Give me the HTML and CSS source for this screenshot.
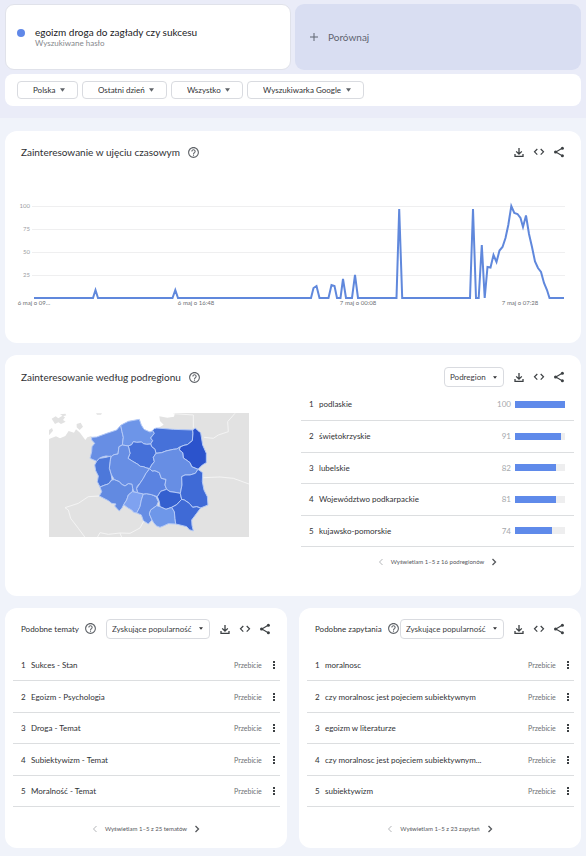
FILE: index.html
```html
<!DOCTYPE html>
<html lang="pl">
<head>
<meta charset="utf-8">
<meta name="viewport" content="width=device-width, initial-scale=1">
<title>egoizm droga do zagłady czy sukcesu</title>
<link rel="stylesheet" href="styles.css">
</head>
<body>
<svg class="sprite" aria-hidden="true">
  <symbol id="help" viewBox="0 0 24 24"><path d="M11 18h2v-2h-2v2zm1-16C6.48 2 2 6.48 2 12s4.48 10 10 10 10-4.48 10-10S17.52 2 12 2zm0 18c-4.41 0-8-3.59-8-8s3.59-8 8-8 8 3.59 8 8-3.59 8-8 8zm0-14c-2.21 0-4 1.79-4 4h2c0-1.1.9-2 2-2s2 .9 2 2c0 2-3 1.75-3 5h2c0-2.25 3-2.5 3-5 0-2.21-1.79-4-4-4z"/></symbol>
  <symbol id="download" viewBox="0 0 12 12"><path d="M6 2v6M3.2 5.4 6 8.2l2.8-2.8M2 8v2.4h8V8" fill="none" stroke="currentColor" stroke-width="1.3"/></symbol>
  <symbol id="code" viewBox="0 0 12 12"><path d="M4.3 3 1.5 5.8l2.8 2.8M7.7 3l2.8 2.8-2.8 2.8" fill="none" stroke="currentColor" stroke-width="1.2"/></symbol>
  <symbol id="share" viewBox="0 0 12 12"><path d="M9.2 2.3 2.8 6l6.4 3.7" fill="none" stroke="currentColor" stroke-width="1.1"/><circle cx="9.4" cy="2.3" r="1.5"/><circle cx="2.6" cy="6" r="1.6"/><circle cx="9.4" cy="9.7" r="1.5"/></symbol>
  <symbol id="more" viewBox="0 0 4 10"><path d="M1 1h2v2H1zM1 4h2v2H1zM1 7h2v2H1z"/></symbol>
  <symbol id="arrow" viewBox="0 0 6 4"><path d="M0 0h6L3 4z"/></symbol>
  <symbol id="prev" viewBox="0 0 6 8"><path d="M4.5 1 1.5 4l3 3" fill="none" stroke="currentColor"/></symbol>
  <symbol id="next" viewBox="0 0 6 8"><path d="m1.5 1 3 3-3 3" fill="none" stroke="currentColor" stroke-width="1.3"/></symbol>
</svg>

<header class="top">
  <div class="terms">
    <div class="term">
      <span class="dot"></span>
      <div>
        <h1>egoizm droga do zagłady czy sukcesu</h1>
        <p>Wyszukiwane hasło</p>
      </div>
    </div>
    <button class="compare" type="button">
      <svg viewBox="0 0 8 8" aria-hidden="true"><path d="M4 0v8M0 4h8" stroke="currentColor"/></svg>
      Porównaj
    </button>
  </div>
  <div class="filters">
    <span class="pick"><select aria-label="Kraj"><option>Polska</option></select><svg><use href="#arrow"/></svg></span>
    <span class="pick"><select aria-label="Okres"><option>Ostatni dzień</option></select><svg><use href="#arrow"/></svg></span>
    <span class="pick"><select aria-label="Kategoria"><option>Wszystko</option></select><svg><use href="#arrow"/></svg></span>
    <span class="pick"><select aria-label="Usługa"><option>Wyszukiwarka Google</option></select><svg><use href="#arrow"/></svg></span>
  </div>
</header>

<main>
  <section class="card timeline">
    <div class="head">
      <h2>Zainteresowanie w ujęciu czasowym</h2>
      <button class="help" type="button" aria-label="Pomoc"><svg><use href="#help"/></svg></button>
      <div class="tools">
        <button type="button" aria-label="Pobierz"><svg><use href="#download"/></svg></button>
        <button type="button" aria-label="Umieść"><svg><use href="#code"/></svg></button>
        <button type="button" aria-label="Udostępnij"><svg><use href="#share"/></svg></button>
      </div>
    </div>
    <svg class="chart" viewBox="15 200 554 110" role="img" aria-label="Wykres zainteresowania">
      <path class="grid" d="M32 206.500H565M32 229.500H565M32 252.500H565M32 275.500H565"/>
      <g class="ylab"><text x="30" y="208">100</text><text x="30" y="231">75</text><text x="30" y="254">50</text><text x="30" y="277">25</text></g>
      <path class="line" d="M34 298H93L95.500 290 98 298H172.500L175.300 290 178 298H311L313.500 288 316.500 286 319.500 298H328.500L331.500 285 334.500 286 337 298H340.500L343 279 346 298H352L355 275 358 298H396.500L399.200 209 402.200 298H470L473 209 476 298H478.700L481.800 245 484.700 298 487.500 267 490.500 267.500 493.500 255 496.500 262 499.500 250.500 502.500 247 505.500 238 508.300 225 511.300 206 514.300 213 517.500 214 520.500 218 523 227 526 215.500 529 234 532 247 535 261.500 538 268 541 272 544 283 547 290 549.500 298H564"/>
      <g class="xlab"><text x="34" y="305">6 maj o 09…</text><text x="196" y="305">6 maj o 16:48</text><text x="358" y="305">7 maj o 00:08</text><text x="520" y="305">7 maj o 07:28</text></g>
    </svg>
  </section>

  <section class="card region">
    <div class="head">
      <h2>Zainteresowanie według podregionu</h2>
      <button class="help" type="button" aria-label="Pomoc"><svg><use href="#help"/></svg></button>
      <div class="tools">
        <span class="pick small"><select aria-label="Poziom"><option>Podregion</option></select><svg><use href="#arrow"/></svg></span>
        <button type="button" aria-label="Pobierz"><svg><use href="#download"/></svg></button>
        <button type="button" aria-label="Umieść"><svg><use href="#code"/></svg></button>
        <button type="button" aria-label="Udostępnij"><svg><use href="#share"/></svg></button>
      </div>
    </div>
    <div class="split">
      <svg class="map" viewBox="147 189 600 373" role="img" aria-label="Mapa Polski">
        <path fill="#e2e2e2" d="M147 189h600v373H147z"/>
        <path fill="#fff" d="M147 189H525L522 200 502 203 478 199 480 213 491 224 480 231 468 236 455 246 424 240 418 220 362 232 340 250 300 262 274 270 262 262 256 270 240 248 228 238 222 248 206 243 196 258 180 265 168 259 147 267z"/>
        <path fill="#e2e2e2" d="M155 206l12-7 8 6 12-8 8 5-6 8 8 5-14 7-8-5-10 5zM180 193l16-2 3 5-9 3zM230 222l12-4 7 12-10 10-9-8zM147 240l9-6 3 8-12 14zM288 190h18l-3 4h-12zM262 262l12-4 6 14-14 2z"/>
        <path class="border" d="M298 438 265 440 235 460 195 473 205 480 212 505 235 535 255 562M300 548l25 5 35-4 30 1 30-16 12-22M300 548l-8 14M360 549l5 13M610 383l50-2 40 4 47 17M612 262l28 3 15-10 30-10-2-30 22-25M520 191l60 4v38"/>
        <g class="areas">
          <path fill="#678ee4" d="M275 262 290 261 320 250 350 240 362 226 366 245 370 262 367 285 357 290 354 312 342 314 335 320 318 318 306 321 298 325 290 334 270 325 275 305 276 290 284 280 275 270z"/>
          <path fill="#6d95e8" d="M362 226 373 220 385 214 418 208 424 225 432 238 450 246 458 242 463 250 452 264 458 272 452 282 440 283 430 281 425 276 410 277 400 275 395 284 385 288 367 285 370 262 366 245z"/>
          <path fill="#4671d9" d="M458 242 462 236 470 234 520 238 578 240 579 250 577 272 562 284 552 286 540 291 530 297 520 298 498 303 485 308 468 310 465 298 455 290 452 282 458 272 452 264 463 250z"/>
          <path fill="#2b53cc" d="M578 240 586 234 594 242 602 248 608 285 619 310 619 338 607 345 594 358 575 350 570 338 562 332 550 324 548 308 538 300 540 291 552 286 562 284 577 272 579 250z"/>
          <path fill="#4570d9" d="M385 288 395 284 400 275 410 277 425 276 430 281 440 283 452 282 455 290 465 298 468 310 460 322 463 335 455 345 449 356 440 354 430 350 421 349 412 342 398 334 384 325 390 310z"/>
          <path fill="#678ee4" d="M357 290 367 285 385 288 390 310 384 325 398 334 412 342 421 349 430 350 440 354 449 356 438 370 430 385 420 400 412 408 410 415 413 428 402 426 396 410 396 403 385 401 375 408 365 403 358 395 343 389 333 372 328 355 330 335 333 320 342 314 354 312z"/>
          <path fill="#4d78da" d="M290 334 298 325 306 324 318 322 333 318 330 335 328 355 333 372 336 388 325 402 315 405 300 411 292 395 295 378 287 362 284 345z"/>
          <path fill="#628ae1" d="M300 411 315 405 325 402 336 390 343 389 358 395 365 403 375 408 385 401 396 403 398 415 397 425 385 435 380 450 371 464 366 474 358 483 350 475 344 468 348 462 335 460 325 452 298 438 305 425z"/>
          <path fill="#7fa2f0" d="M397 425 402 426 413 428 430 432 424 450 420 470 410 489 401 487 395 480 384 474 371 464 380 450 385 435z"/>
          <path fill="#668de4" d="M430 432 440 431 455 434 468 440 475 455 470 467 452 480 448 492 456 510 445 522 430 512 424 495 410 489 420 470 424 450z"/>
          <path fill="#5b83e1" d="M449 356 456 363 465 362 478 368 484 385 498 388 495 405 500 418 482 424 472 440 455 434 440 431 430 432 413 428 410 415 420 400 430 385 438 370z"/>
          <path fill="#678ee4" d="M468 310 485 308 498 303 520 298 530 297 540 291 538 300 548 308 550 324 562 332 570 338 575 350 594 358 586 370 570 375 555 375 545 380 546 405 541 430 525 427 510 425 500 418 495 405 498 388 484 385 478 368 465 362 456 363 449 356 455 345 463 335 460 322z"/>
          <path fill="#3460cf" d="M472 440 482 424 500 418 510 425 525 427 541 430 545 448 530 464 515 472 498 478 480 470 478 455z"/>
          <path fill="#3f6ad6" d="M545 380 555 375 570 375 586 370 594 358 608 368 607 395 612 420 622 440 624 465 602 474 590 470 578 472 568 460 553 450 545 448 541 430 546 405z"/>
          <path fill="#6e97e9" d="M452 480 470 467 480 470 498 478 515 472 523 485 525 505 527 522 505 521 490 528 480 532 470 528 462 520 456 510 448 492z"/>
          <path fill="#3f6ad6" d="M515 472 530 464 545 448 553 450 568 460 578 472 590 470 602 474 590 490 575 510 576 526 580 543 568 539 560 530 540 525 527 522 525 505 523 485z"/>
        </g>
      </svg>
      <div>
        <table>
          <tr><td class="num">1</td><td class="name">podlaskie</td><td class="val">100</td><td class="meter"><span><i style="width:100%"></i></span></td></tr>
          <tr><td class="num">2</td><td class="name">świętokrzyskie</td><td class="val">91</td><td class="meter"><span><i style="width:91%"></i></span></td></tr>
          <tr><td class="num">3</td><td class="name">lubelskie</td><td class="val">82</td><td class="meter"><span><i style="width:82%"></i></span></td></tr>
          <tr><td class="num">4</td><td class="name">Województwo podkarpackie</td><td class="val">81</td><td class="meter"><span><i style="width:81%"></i></span></td></tr>
          <tr><td class="num">5</td><td class="name">kujawsko-pomorskie</td><td class="val">74</td><td class="meter"><span><i style="width:74%"></i></span></td></tr>
        </table>
        <nav class="pager"><button type="button" aria-label="Wstecz" disabled><svg><use href="#prev"/></svg></button>Wyświetlam 1–5 z 16 podregionów<button type="button" aria-label="Dalej"><svg><use href="#next"/></svg></button></nav>
      </div>
    </div>
  </section>

  <div class="pair">
    <section class="card related">
      <div class="head">
        <h3>Podobne tematy</h3>
        <button class="help" type="button" aria-label="Pomoc"><svg><use href="#help"/></svg></button>
        <div class="tools">
          <span class="pick small"><select aria-label="Sortowanie tematów"><option>Zyskujące popularność</option></select><svg><use href="#arrow"/></svg></span>
          <button type="button" aria-label="Pobierz"><svg><use href="#download"/></svg></button>
          <button type="button" aria-label="Umieść"><svg><use href="#code"/></svg></button>
          <button type="button" aria-label="Udostępnij"><svg><use href="#share"/></svg></button>
        </div>
      </div>
      <table>
        <tr><td class="num">1</td><td class="name">Sukces - Stan</td><td class="rise">Przebicie</td><td class="menu"><button type="button" aria-label="Więcej"><svg><use href="#more"/></svg></button></td></tr>
        <tr><td class="num">2</td><td class="name">Egoizm - Psychologia</td><td class="rise">Przebicie</td><td class="menu"><button type="button" aria-label="Więcej"><svg><use href="#more"/></svg></button></td></tr>
        <tr><td class="num">3</td><td class="name">Droga - Temat</td><td class="rise">Przebicie</td><td class="menu"><button type="button" aria-label="Więcej"><svg><use href="#more"/></svg></button></td></tr>
        <tr><td class="num">4</td><td class="name">Subiektywizm - Temat</td><td class="rise">Przebicie</td><td class="menu"><button type="button" aria-label="Więcej"><svg><use href="#more"/></svg></button></td></tr>
        <tr><td class="num">5</td><td class="name">Moralność - Temat</td><td class="rise">Przebicie</td><td class="menu"><button type="button" aria-label="Więcej"><svg><use href="#more"/></svg></button></td></tr>
      </table>
      <nav class="pager"><button type="button" aria-label="Wstecz" disabled><svg><use href="#prev"/></svg></button>Wyświetlam 1–5 z 25 tematów<button type="button" aria-label="Dalej"><svg><use href="#next"/></svg></button></nav>
    </section>

    <section class="card related">
      <div class="head">
        <h3>Podobne zapytania</h3>
        <button class="help" type="button" aria-label="Pomoc"><svg><use href="#help"/></svg></button>
        <div class="tools">
          <span class="pick small"><select aria-label="Sortowanie zapytań"><option>Zyskujące popularność</option></select><svg><use href="#arrow"/></svg></span>
          <button type="button" aria-label="Pobierz"><svg><use href="#download"/></svg></button>
          <button type="button" aria-label="Umieść"><svg><use href="#code"/></svg></button>
          <button type="button" aria-label="Udostępnij"><svg><use href="#share"/></svg></button>
        </div>
      </div>
      <table>
        <tr><td class="num">1</td><td class="name">moralnosc</td><td class="rise">Przebicie</td><td class="menu"><button type="button" aria-label="Więcej"><svg><use href="#more"/></svg></button></td></tr>
        <tr><td class="num">2</td><td class="name">czy moralnosc jest pojeciem subiektywnym</td><td class="rise">Przebicie</td><td class="menu"><button type="button" aria-label="Więcej"><svg><use href="#more"/></svg></button></td></tr>
        <tr><td class="num">3</td><td class="name">egoizm w literaturze</td><td class="rise">Przebicie</td><td class="menu"><button type="button" aria-label="Więcej"><svg><use href="#more"/></svg></button></td></tr>
        <tr><td class="num">4</td><td class="name">czy moralnosc jest pojeciem subiektywnym...</td><td class="rise">Przebicie</td><td class="menu"><button type="button" aria-label="Więcej"><svg><use href="#more"/></svg></button></td></tr>
        <tr><td class="num">5</td><td class="name">subiektywizm</td><td class="rise">Przebicie</td><td class="menu"><button type="button" aria-label="Więcej"><svg><use href="#more"/></svg></button></td></tr>
      </table>
      <nav class="pager"><button type="button" aria-label="Wstecz" disabled><svg><use href="#prev"/></svg></button>Wyświetlam 1–5 z 23 zapytań<button type="button" aria-label="Dalej"><svg><use href="#next"/></svg></button></nav>
    </section>
  </div>
</main>
</body>
</html>
```
FILE: styles.css
```css
* { box-sizing: border-box; }
body {
  margin: 0;
  background: #f0f3fa;
  color: #303134;
  font: 8px/12px Lato, "Open Sans", sans-serif;
}
h1, h2, h3, p { margin: 0; font-weight: 400; }
button, select { font: inherit; color: inherit; }
button { border: 0; padding: 0; background: none; cursor: pointer; }
svg { display: block; fill: currentColor; }
.sprite { position: absolute; width: 0; height: 0; }

.top { padding: 4px 5px 12px; background: #eaecf8; }
.terms { display: grid; grid-template-columns: 1fr 1fr; gap: 4px; height: 66px; }
.term {
  display: flex;
  align-items: center;
  gap: 10px;
  padding: 0 11px;
  border: 1px solid #e0e2ea;
  border-radius: 9px;
  background: #fff;
}
.term h1 { font-size: 10px; line-height: 12px; color: #202124; }
.term p { line-height: 10px; color: #85888c; }
.dot { width: 8px; height: 8px; border-radius: 50%; background: #6088e8; margin-bottom: 8px; }
.compare {
  display: flex;
  align-items: center;
  gap: 10px;
  padding: 0 15px;
  border-radius: 9px;
  background: #d9def2;
  color: #5f6470;
  font-size: 10px;
}
.compare svg { width: 8px; height: 8px; }
.filters {
  display: flex;
  flex-wrap: wrap;
  gap: 4px;
  margin-top: 4px;
  padding: 7px 12px;
  border-radius: 8px;
  background: #fff;
}

/* Drop-down with its arrow laid over the right padding */
.pick { display: grid; align-items: center; }
.pick select, .pick svg { grid-area: 1 / 1; }
.pick select {
  appearance: none;
  height: 18px;
  padding: 0 21px 0 15px;
  border: 1px solid #d9dbe0;
  border-radius: 4px;
  background: #fff;
}
.pick svg { width: 5px; height: 4px; margin-right: 13px; justify-self: end; pointer-events: none; color: #5f6368; }
.pick.small { margin-right: 5px; }
.pick.small select { height: 20px; padding: 0 17px 0 5px; }
.pick.small svg { width: 4px; height: 3px; margin-right: 7px; color: #303134; }

main { display: grid; gap: 12px; padding: 13px 5px 9px; }
.card { border-radius: 12px; background: #fff; min-width: 0; }
.head { display: flex; align-items: center; height: 42px; padding: 0 12px 0 16px; }
.head h2 { font-size: 10px; }
.head h3 { font-size: 8px; white-space: nowrap; }
.help { margin-left: 7px; color: #5f6368; }
.help svg { width: 13px; height: 13px; }
.tools { display: flex; align-items: center; margin-left: auto; color: #3c4043; }
.tools button { display: grid; place-items: center; width: 20px; height: 20px; }
.tools button svg { width: 12px; height: 12px; }

.timeline { padding-bottom: 33px; }
.chart { width: calc(100% - 22px); margin: 27px 12px 0 10px; font-size: 6px; }
.grid { stroke: #efeff0; fill: none; }
.line { stroke: #6088dc; stroke-width: 2; fill: none; }
.ylab { text-anchor: end; fill: #9a9da1; }
.xlab { text-anchor: middle; fill: #6d7074; }

.region .head { height: 34px; padding-top: 10px; }
.split { display: grid; grid-template-columns: 288px 1fr; gap: 8px; padding: 0 7px 19px 0; }
.map { width: 200px; margin: 24px auto 0; }
.border { fill: none; stroke: #f4f4f4; stroke-width: 3; }
.areas path { stroke: #b4c9f6; stroke-width: 3; stroke-linejoin: round; }

table { width: 100%; border-collapse: collapse; }
td { height: 32px; padding: 0; border-bottom: 1px solid #dcdee0; }
tr:nth-child(odd) td { height: 31px; }
.num { width: 18px; padding-left: 8px; }
.name { white-space: nowrap; }
.val { width: 24px; padding-right: 4px; text-align: right; color: #a5a8ac; }
.meter { width: 59px; padding-right: 9px; }
.meter span { display: block; height: 7px; background: #eeeeef; }
.meter i { display: block; height: 7px; background: #5f8aea; }
.rise { width: 34px; color: #6d7074; font-size: 7px; }
.menu { width: 12px; }
.menu button { display: block; margin-left: 4px; color: #3c4043; }
.menu svg { width: 4px; height: 10px; }
.pager {
  display: flex;
  align-items: center;
  justify-content: center;
  gap: 7px;
  height: 30px;
  font-size: 6px;
  color: #55585c;
}
.pager svg { width: 6px; height: 8px; }
.pager button:disabled { color: #b4b6b9; }
.related { padding-bottom: 4px; }
.related .help { margin-left: 5px; }
.related table { width: calc(100% - 15px); margin: 0 7px 0 8px; }
.related .pager { margin-top: 7px; }
.pair { display: grid; grid-template-columns: 1fr 1fr; gap: 12px; }

@media (max-width: 540px) {
  .split, .pair { grid-template-columns: 1fr; }
}
```
